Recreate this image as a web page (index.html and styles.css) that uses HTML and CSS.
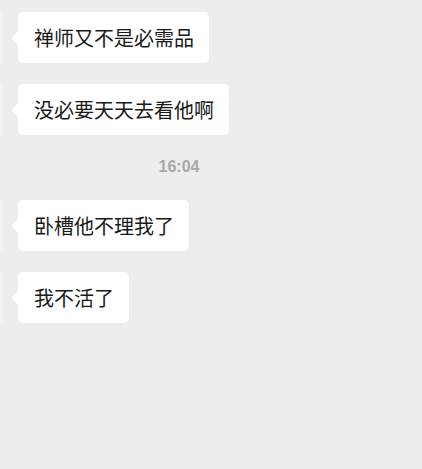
FILE: index.html
```html
<!DOCTYPE html>
<html lang="zh-CN">
<head>
  <meta charset="UTF-8" />
  <meta name="viewport" content="width=device-width, initial-scale=1.0" />
  <title>聊天</title>
  <link rel="stylesheet" href="styles.css">
</head>
<body>
  <div class="chat">
    <div class="msg">
      <span class="avatar"></span>
      <div class="bubble">禅师又不是必需品</div>
    </div>
    <div class="msg">
      <span class="avatar"></span>
      <div class="bubble">没必要天天去看他啊</div>
    </div>
    <div class="time">16:04</div>
    <div class="msg">
      <span class="avatar"></span>
      <div class="bubble">卧槽他不理我了</div>
    </div>
    <div class="msg">
      <span class="avatar"></span>
      <div class="bubble">我不活了</div>
    </div>
  </div>
</body>
</html>
```

FILE: styles.css
```css
body {
  margin: 0;
  background: #ededed;
  font-family: "Noto Sans CJK SC", "Liberation Sans", sans-serif;
  color: #191919;
}

.chat {
  display: flex;
  flex-direction: column;
  padding-top: 12px;
}

.msg {
  display: flex;
  align-items: stretch;
  margin-bottom: 21px;
}

.avatar {
  width: 3px;
  background: #f3f3f3;
  margin-right: 15px;
}

.bubble {
  position: relative;
  background: #fff;
  border-radius: 5px;
  padding: 12px 15px 12px 16px;
  font-size: 20px;
  line-height: 27px;
  height: 27px;
  white-space: nowrap;
}

.bubble::before {
  content: "";
  position: absolute;
  left: -6px;
  top: 50%;
  margin-top: -7px;
  border-style: solid;
  border-width: 7px 6px 7px 0;
  border-color: transparent #fff transparent transparent;
}

.time {
  width: 358px;
  text-align: center;
  font-family: "Liberation Sans", sans-serif;
  font-weight: bold;
  font-size: 16px;
  line-height: 18px;
  color: #a8a8a8;
  margin: 2px 0 24px;
}
```
